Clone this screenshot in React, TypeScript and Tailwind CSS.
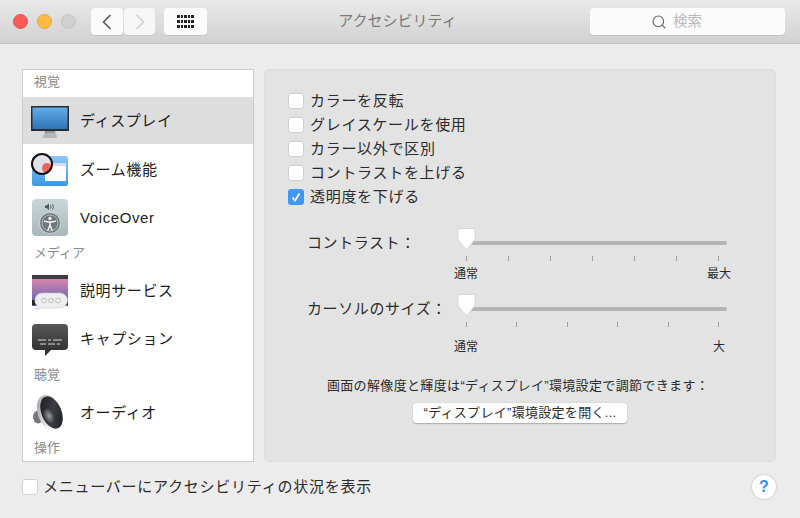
import { Search } from "lucide-react";

const font = "font-['Liberation_Sans','Noto_Sans_CJK_JP',sans-serif]";

function DisplayIcon() {
  return (
    <svg width="40" height="40" viewBox="0 0 40 40">
      <defs>
        <linearGradient id="screen" x1="0" y1="0" x2="0" y2="1">
          <stop offset="0" stopColor="#62ace8" />
          <stop offset="1" stopColor="#2f75b8" />
        </linearGradient>
        <linearGradient id="stand" x1="0" y1="0" x2="0" y2="1">
          <stop offset="0" stopColor="#8b8b8b" />
          <stop offset="1" stopColor="#c4c4c4" />
        </linearGradient>
      </defs>
      <path d="M15 30h10l1 4h-12z" fill="url(#stand)" />
      <rect x="13" y="34" width="14" height="3" rx="1" fill="#b5b5b5" />
      <rect x="1" y="5" width="38" height="25" fill="#2c2c2e" />
      <rect x="2.500" y="6.500" width="35" height="21.500" fill="url(#screen)" />
    </svg>
  );
}

function ZoomIcon() {
  return (
    <svg width="40" height="40" viewBox="0 0 40 40">
      <defs>
        <linearGradient id="zoomBlue" x1="0" y1="0" x2="0" y2="1">
          <stop offset="0" stopColor="#8cc8f5" />
          <stop offset="1" stopColor="#3f97e2" />
        </linearGradient>
      </defs>
      <rect x="2" y="7" width="36" height="30" rx="2.500" fill="url(#zoomBlue)" />
      <rect x="15" y="14" width="21" height="18" fill="#ffffff" />
      <rect x="15" y="14" width="21" height="3" fill="#d8dde2" />
      <circle cx="12" cy="15" r="10" fill="#ece6e8" fillOpacity="0.9" />
      <circle cx="17" cy="19" r="5" fill="#f2615c" />
      <circle cx="12" cy="15" r="10" fill="none" stroke="#111111" strokeWidth="2" />
    </svg>
  );
}

function VoiceOverIcon() {
  return (
    <svg width="40" height="40" viewBox="0 0 40 40">
      <defs>
        <linearGradient id="voBg" x1="0" y1="0" x2="0" y2="1">
          <stop offset="0" stopColor="#c8d6da" />
          <stop offset="1" stopColor="#a9b8bb" />
        </linearGradient>
      </defs>
      <rect x="2" y="2" width="36" height="37" rx="4" fill="url(#voBg)" />
      <path d="M15 8.500h1.500l2.500-2v6.500l-2.500-2h-1.500z" fill="#4f585a" />
      <path d="M20.500 8q1 1.800 0 3.500M22.500 7q1.800 2.800 0 5.500" fill="none" stroke="#4f585a" strokeWidth="0.9" />
      <circle cx="20" cy="26" r="10.500" fill="#6f7779" stroke="#dfe5e6" strokeWidth="0.8" />
      <circle cx="20" cy="26" r="8" fill="none" stroke="#c6cdce" strokeWidth="0.8" />
      <circle cx="20" cy="21.500" r="1.700" fill="#f0f3f3" />
      <path d="M14.500 24.200l4 .8h3l4-.8M20 25v3.500M20 28l-2 5M20 28l2 5" fill="none" stroke="#f0f3f3" strokeWidth="1.500" strokeLinecap="round" />
    </svg>
  );
}

function DescriptionIcon() {
  return (
    <svg width="40" height="40" viewBox="0 0 40 40">
      <defs>
        <linearGradient id="descBg" x1="0" y1="0" x2="0" y2="1">
          <stop offset="0" stopColor="#e58aa8" />
          <stop offset="0.6" stopColor="#8f6fb4" />
          <stop offset="1" stopColor="#5a5f9e" />
        </linearGradient>
      </defs>
      <rect x="2" y="5" width="36" height="30" fill="url(#descBg)" />
      <rect x="2" y="4" width="36" height="4" fill="#3d3b3f" />
      <rect x="2" y="29" width="36" height="5" fill="#262528" />
      <path d="M12 22h18a7.500 7.500 0 0 1 0 15h-18q-2 0 -3.500 .8q-2 .6 -3 .2q2 -1.500 1.800 -3a7.500 7.500 0 0 1 4.700 -13z" fill="#eeeeee" stroke="#c9c9c9" strokeWidth="0.6" />
      <circle cx="14" cy="29.500" r="2.300" fill="#ffffff" stroke="#a6a6a6" strokeWidth="0.8" />
      <circle cx="21" cy="29.500" r="2.300" fill="#ffffff" stroke="#a6a6a6" strokeWidth="0.8" />
      <circle cx="28" cy="29.500" r="2.300" fill="#ffffff" stroke="#a6a6a6" strokeWidth="0.8" />
    </svg>
  );
}

function CaptionIcon() {
  return (
    <svg width="40" height="40" viewBox="0 0 40 40">
      <defs>
        <linearGradient id="capBg" x1="0" y1="0" x2="0" y2="1">
          <stop offset="0" stopColor="#585858" />
          <stop offset="1" stopColor="#2b2b2b" />
        </linearGradient>
      </defs>
      <path d="M6 5h28a4 4 0 0 1 4 4v18a4 4 0 0 1 -4 4h-13l-6 6v-6h-9a4 4 0 0 1 -4 -4v-18a4 4 0 0 1 4 -4z" fill="url(#capBg)" />
      <path d="M8 21h8M18 21h3M23 21h9M10 25h6M18 25h7M27 25h3" stroke="#d9d9d9" strokeWidth="1" fill="none" />
    </svg>
  );
}

function AudioIcon() {
  return (
    <svg width="40" height="40" viewBox="0 0 40 40">
      <defs>
        <linearGradient id="cone" x1="0" y1="0" x2="1" y2="1">
          <stop offset="0" stopColor="#17181b" />
          <stop offset="0.55" stopColor="#3b3d42" />
          <stop offset="1" stopColor="#17181b" />
        </linearGradient>
        <radialGradient id="coneCenter">
          <stop offset="0" stopColor="#9a9ca1" />
          <stop offset="1" stopColor="#3b3d42" />
        </radialGradient>
        <linearGradient id="rim" x1="0" y1="0" x2="1" y2="1">
          <stop offset="0" stopColor="#8d8d91" />
          <stop offset="0.5" stopColor="#f1f1f1" />
          <stop offset="1" stopColor="#ffffff" />
        </linearGradient>
      </defs>
      <ellipse cx="8" cy="25" rx="5" ry="6.500" fill="#77787d" />
      <ellipse cx="20" cy="21" rx="12" ry="19" transform="rotate(-22 20 21)" fill="url(#rim)" />
      <ellipse cx="21.500" cy="20.500" rx="10" ry="17" transform="rotate(-22 21.500 20.500)" fill="url(#cone)" />
      <ellipse cx="19" cy="24" rx="5" ry="8" transform="rotate(-22 19 24)" fill="url(#coneCenter)" />
    </svg>
  );
}

function SidebarHeader({ label, className }: { label: string; className: string }) {
  return <div className={`pl-[11px] text-[13px] text-[#8a8a8a] leading-none flex items-center ${className}`}>{label}</div>;
}

function SidebarRow({ icon, label, selected, drop, className }: { icon: React.ReactNode; label: string; selected?: boolean; drop?: boolean; className: string }) {
  return (
    <div className={`flex items-center gap-[10px] pl-[7px] ${selected ? "bg-[#dddddd]" : ""} ${className}`}>
      {icon}
      <span className={`text-[15px] text-[#1c1c1c] tracking-[0.6px] whitespace-nowrap ${drop ? "pt-[2px]" : ""}`}>{label}</span>
    </div>
  );
}

function CheckRow({ label, checked }: { label: string; checked?: boolean }) {
  return (
    <div className="flex items-center h-6">
      {checked ? (
        <div className="w-4 h-4 rounded-[3px] bg-[#3f97f6] flex items-center justify-center">
          <svg width="12" height="12" viewBox="0 0 12 12">
            <path d="M2.500 6.500l2.500 3l4.500-7" fill="none" stroke="#ffffff" strokeWidth="1.800" />
          </svg>
        </div>
      ) : (
        <div className="w-4 h-4 rounded-[3px] bg-white border border-[#cfcfcf]" />
      )}
      <span className="ml-[6px] text-[15px] text-[#2b2b2b] tracking-[0.7px] whitespace-nowrap">{label}</span>
    </div>
  );
}

function Slider({ label, ticks, maxLabel, labelGap }: { label: string; ticks: number; maxLabel: string; labelGap: string }) {
  return (
    <div className="flex">
      <div className="w-[158px] h-[16px] flex items-center text-[15px] text-[#2b2b2b] tracking-[0.6px] whitespace-nowrap">{label}</div>
      <div className="w-[262px] relative">
        <div className="h-[16px] flex items-center">
          <div className="w-full h-1 rounded-full bg-[#b4b4b4]" />
        </div>
        <svg className="absolute left-[-9px] top-[-7px]" width="21" height="23" viewBox="0 0 21 23">
          <path d="M3 .5h14a2 2 0 0 1 2 2v9l-8.500 10.500l-8.500-10.500v-9a2 2 0 0 1 2-2z" fill="#ffffff" stroke="#d2d2d2" strokeWidth="0.8" />
        </svg>
        <div className="w-[253px] ml-[1px] mt-[5px] h-[5px] flex justify-between">
          {Array.from({ length: ticks }).map((_, i) => (
            <div key={i} className="w-px h-[5px] bg-[#9c9c9c]" />
          ))}
        </div>
        <div className={`w-[253px] ml-[1px] flex justify-between text-xs leading-none text-[#2b2b2b] ${labelGap}`}>
          <span className="w-0 flex justify-center whitespace-nowrap">通常</span>
          <span className="w-0 flex justify-center whitespace-nowrap">{maxLabel}</span>
        </div>
      </div>
    </div>
  );
}

export default function App() {
  return (
    <div className={`w-[800px] h-[518px] overflow-hidden bg-[#ececec] ${font}`}>
      <div className="h-[44px] grid grid-cols-[1fr_auto_1fr] items-center bg-gradient-to-b from-[#e9e9e9] to-[#d1d1d1] border-b border-[#bdbdbd] pl-[13px] pr-[15px]">
        <div className="flex items-center">
          <div className="w-[15px] h-[15px] rounded-full bg-[#fc5b57] border border-[#e5524e]" />
          <div className="w-[15px] h-[15px] rounded-full bg-[#fdbb40] border border-[#e3a737] ml-[9px]" />
          <div className="w-[15px] h-[15px] rounded-full bg-[#d0d0d0] border border-[#c4c4c4] ml-[9px]" />
          <div className="flex ml-[15px] gap-px">
            <div className="w-[32px] h-[27px] rounded-[4px] bg-[#fbfbfb] shadow-[0_1px_0_#c4c4c4] flex items-center justify-center">
              <svg width="12" height="18" viewBox="0 0 12 18">
                <path d="M9.500 2l-7 7l7 7" fill="none" stroke="#555555" strokeWidth="1.600" />
              </svg>
            </div>
            <div className="w-[31px] h-[27px] rounded-[4px] bg-[#f7f7f7] shadow-[0_1px_0_#c4c4c4] flex items-center justify-center">
              <svg width="12" height="18" viewBox="0 0 12 18">
                <path d="M2.500 2l7 7l-7 7" fill="none" stroke="#cfcfcf" strokeWidth="1.600" />
              </svg>
            </div>
          </div>
          <div className="w-[43px] h-[27px] rounded-[4px] bg-[#fbfbfb] shadow-[0_1px_0_#c4c4c4] ml-[9px] flex items-center justify-center">
            <div className="grid grid-cols-5 gap-x-[1px] gap-y-[2.500px]">
              {Array.from({ length: 15 }).map((_, i) => (
                <div key={i} className="w-[2.500px] h-[2.500px] bg-[#222222]" />
              ))}
            </div>
          </div>
        </div>
        <div className="text-[15px] text-[#7a7a7a] whitespace-nowrap pr-[3px]">アクセシビリティ</div>
        <div className="flex justify-end">
          <div className="w-[195px] h-[27px] rounded-[4px] bg-[#fbfbfb] shadow-[0_1px_0_#c4c4c4] flex items-center justify-center gap-[6px] pr-[22px]">
            <Search size={16} strokeWidth={1.6} className="text-[#666666]" />
            <span className="text-[14.500px] text-[#b9b9b9]">検索</span>
          </div>
        </div>
      </div>

      <div className="flex gap-[10px] pl-[22px] pt-[25px]">
        <div className="w-[232px] h-[393px] overflow-hidden bg-white border border-[#cccccc]">
          <SidebarHeader label="視覚" className="h-[27px] pb-[5px]" />
          <SidebarRow icon={<DisplayIcon />} label="ディスプレイ" selected drop className="h-[47px]" />
          <div className="h-px" />
          <SidebarRow icon={<ZoomIcon />} label="ズーム機能" drop className="h-[48px]" />
          <SidebarRow icon={<VoiceOverIcon />} label="VoiceOver" drop className="h-[48px]" />
          <SidebarHeader label="メディア" className="h-[26px] pb-[4px]" />
          <SidebarRow icon={<DescriptionIcon />} label="説明サービス" className="h-[48px]" />
          <SidebarRow icon={<CaptionIcon />} label="キャプション" className="h-[48px]" />
          <SidebarHeader label="聴覚" className="h-[25px] pb-[2px]" />
          <SidebarRow icon={<AudioIcon />} label="オーディオ" drop className="h-[48px]" />
          <SidebarHeader label="操作" className="h-[25px] pb-[2px]" />
        </div>

        <div className="w-[512px] h-[393px] rounded-[5px] bg-[#e3e3e3] border border-[#dedede] pt-[19px]">
          <div className="pl-[23px]">
            <CheckRow label="カラーを反転" />
            <CheckRow label="グレイスケールを使用" />
            <CheckRow label="カラー以外で区別" />
            <CheckRow label="コントラストを上げる" />
            <CheckRow label="透明度を下げる" checked />
          </div>
          <div className="pl-[42px] mt-[26px]">
            <Slider label="コントラスト：" ticks={7} maxLabel="最大" labelGap="mt-[7px]" />
          </div>
          <div className="pl-[42px] mt-[21px]">
            <Slider label="カーソルのサイズ：" ticks={6} maxLabel="大" labelGap="mt-[14px]" />
          </div>
          <div className="mt-[26px] text-[13px] leading-none text-[#2b2b2b] text-center tracking-[0.35px] pr-[4px] whitespace-nowrap">
            画面の解像度と輝度は“ディスプレイ”環境設定で調節できます：
          </div>
          <div className="flex justify-center mt-[11px]">
            <div className="w-[214px] h-[20px] rounded-[3px] bg-white shadow-[0_0_1px_#9a9a9a,0_1px_1px_#b0b0b0] flex items-center justify-center text-[13px] text-[#2b2b2b] tracking-[0.3px] whitespace-nowrap">
              “ディスプレイ”環境設定を開く...
            </div>
          </div>
        </div>
      </div>

      <div className="flex items-center justify-between pl-[22px] pr-[24px] mt-[12px] h-[26px]">
        <div className="flex items-center">
          <div className="w-4 h-4 rounded-[3px] bg-white border border-[#d0d0d0]" />
          <span className="ml-[5px] text-[15px] text-[#2b2b2b] tracking-[0.75px] whitespace-nowrap">メニューバーにアクセシビリティの状況を表示</span>
        </div>
        <div className="w-[24px] h-[24px] rounded-full bg-white shadow-[0_0_2px_#a8a8a8] flex items-center justify-center text-base font-bold text-[#2f8cf5]">?</div>
      </div>
    </div>
  );
}
